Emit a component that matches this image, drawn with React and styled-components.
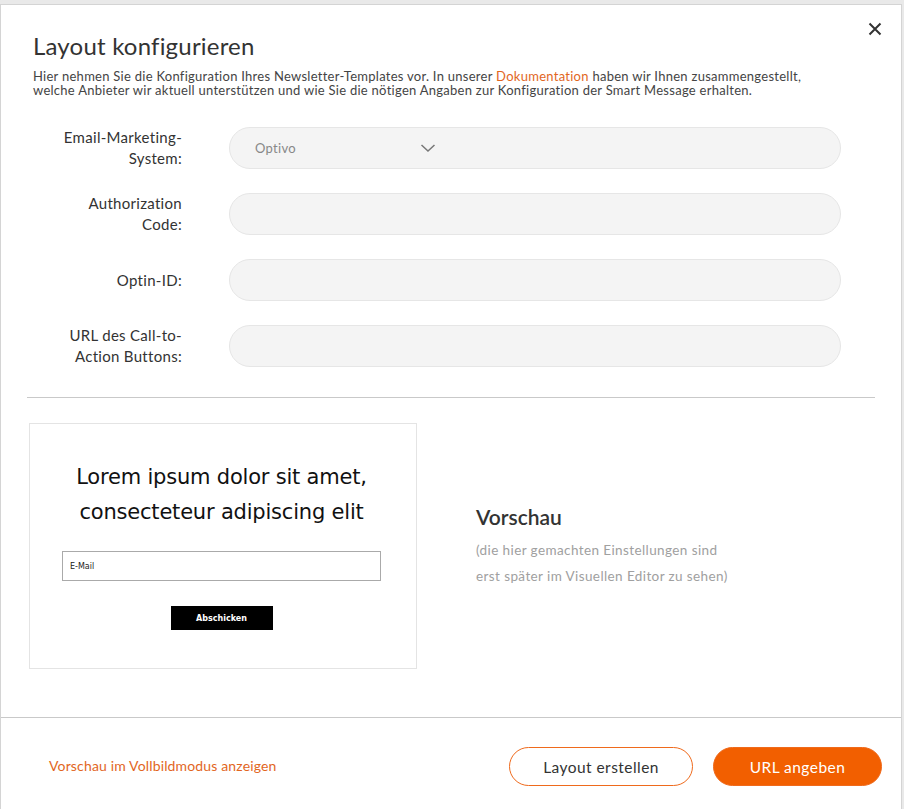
import React from 'react'
import styled, { createGlobalStyle } from 'styled-components'

const GlobalStyle = createGlobalStyle`
  body {
    margin: 0;
    background: #e9e9e9;
    font-family: "Lato", "Open Sans", sans-serif;
    color: #333;
  }
`

const Modal = styled.div`
  margin-top: 4px;
  width: 900px;
  min-height: 804px;
  background: #fff;
  border: 1px solid #d4d4d4;
  position: relative;
`

const Close = styled.button`
  position: absolute;
  top: 17px;
  right: 19px;
  width: 14px;
  height: 14px;
  border: 0;
  background: none;
  padding: 0;
  cursor: pointer;
  display: flex;
`

const Header = styled.div`
  padding: 26px 32px 0;
`

const Title = styled.h1`
  margin: 0 0 8px;
  font-size: 24px;
  line-height: 30px;
  font-weight: 400;
  letter-spacing: 0.2px;
  color: #333;
`

const Intro = styled.p`
  margin: 0;
  font-size: 13px;
  line-height: 14px;
  letter-spacing: 0.27px;
  color: #444;
  a {
    color: #e2661e;
    text-decoration: none;
  }
`

const Form = styled.div`
  display: flex;
  flex-direction: column;
  gap: 24px;
  padding: 30px 60px 30px 0;
`

const Row = styled.div`
  display: grid;
  grid-template-columns: 181px 1fr;
  column-gap: 47px;
  align-items: center;
`

const Label = styled.label`
  text-align: right;
  font-size: 15px;
  line-height: 21px;
  letter-spacing: 0.3px;
  color: #333;
`

const Field = styled.div`
  height: 40px;
  border-radius: 21px;
  background: #f4f4f4;
  border: 1px solid #e6e6e6;
  display: flex;
  align-items: center;
  padding-left: 25px;
  font-size: 13px;
  letter-spacing: 0.3px;
  color: #888;
`

const Chevron = styled.svg`
  margin-left: 124px;
`

const Divider = styled.hr`
  margin: 0 26px;
  border: 0;
  border-top: 1px solid #c9c9c9;
`

const PreviewSection = styled.div`
  display: flex;
  align-items: center;
  padding: 25px 28px 48px;
  gap: 59px;
`

const PreviewBox = styled.div`
  width: 388px;
  height: 246px;
  border: 1px solid #e4e4e4;
  display: flex;
  flex-direction: column;
  align-items: center;
  box-sizing: border-box;
  padding: 36px 3px 0 0;
`

const PreviewHeading = styled.div`
  font-family: "DejaVu Sans", sans-serif;
  font-size: 21px;
  line-height: 35px;
  text-align: center;
  color: #111;
  letter-spacing: -0.2px;
`

const MailInput = styled.div`
  margin-top: 21px;
  width: 319px;
  height: 30px;
  border: 1px solid #aaa;
  box-sizing: border-box;
  display: flex;
  align-items: center;
  padding-left: 7px;
  font-family: "DejaVu Sans", sans-serif;
  font-size: 8px;
  color: #222;
`

const SubmitBtn = styled.div`
  margin-top: 25px;
  width: 102px;
  height: 24px;
  background: #000;
  color: #fff;
  display: flex;
  align-items: center;
  justify-content: center;
  font-family: "DejaVu Sans", sans-serif;
  font-size: 8px;
  font-weight: bold;
`

const PreviewInfo = styled.div`
  padding-top: 0;
`

const InfoTitle = styled.h2`
  margin: 0 0 8px;
  font-size: 21px;
  font-weight: 600;
  color: #333;
`

const InfoText = styled.p`
  margin: 0;
  font-size: 13.5px;
  line-height: 26px;
  letter-spacing: 0.4px;
  color: #a0a0a0;
  width: 252px;
`

const Footer = styled.div`
  border-top: 1px solid #c9c9c9;
  display: flex;
  align-items: center;
  padding: 29px 19px 0 48px;
`

const FooterLink = styled.a`
  font-size: 14px;
  letter-spacing: 0.15px;
  color: #e2661e;
  text-decoration: none;
  margin-right: auto;
  margin-top: -3px;
`

const Button = styled.button`
  height: 39px;
  border-radius: 20px;
  font-family: inherit;
  font-size: 15.5px;
  letter-spacing: 0.45px;
  cursor: pointer;
  border: 1px solid #ef6a1c;
  background: ${(p) => (p.$primary ? '#f25f00' : '#fff')};
  color: ${(p) => (p.$primary ? '#fff' : '#333')};
  width: ${(p) => p.$w}px;
  margin-left: 20px;
`

export default function App() {
  return (
    <>
      <GlobalStyle />
      <Modal>
        <Close aria-label="Schließen">
          <svg width="14" height="14" viewBox="0 0 14 14">
            <path d="M1.5 1.5l11 11M12.5 1.5l-11 11" stroke="#333" strokeWidth="2" />
          </svg>
        </Close>
        <Header>
          <Title>Layout konfigurieren</Title>
          <Intro>
            Hier nehmen Sie die Konfiguration Ihres Newsletter-Templates vor. In unserer{' '}
            <a href="#">Dokumentation</a> haben wir Ihnen zusammengestellt,
            <br />
            welche Anbieter wir aktuell unterstützen und wie Sie die nötigen Angaben zur
            Konfiguration der Smart Message erhalten.
          </Intro>
        </Header>
        <Form>
          <Row>
            <Label>Email-Marketing-<br />System:</Label>
            <Field>
              Optivo
              <Chevron width="16" height="10" viewBox="0 0 16 10">
                <path d="M1.5 2l6.5 6 6.5-6" fill="none" stroke="#777" strokeWidth="1.5" />
              </Chevron>
            </Field>
          </Row>
          <Row>
            <Label>Authorization<br />Code:</Label>
            <Field />
          </Row>
          <Row>
            <Label>Optin-ID:</Label>
            <Field />
          </Row>
          <Row>
            <Label>URL des Call-to-<br />Action Buttons:</Label>
            <Field />
          </Row>
        </Form>
        <Divider />
        <PreviewSection>
          <PreviewBox>
            <PreviewHeading>
              Lorem ipsum dolor sit amet,
              <br />
              consecteteur adipiscing elit
            </PreviewHeading>
            <MailInput>E-Mail</MailInput>
            <SubmitBtn>Abschicken</SubmitBtn>
          </PreviewBox>
          <PreviewInfo>
            <InfoTitle>Vorschau</InfoTitle>
            <InfoText>
              (die hier gemachten Einstellungen sind erst später im Visuellen Editor zu sehen)
            </InfoText>
          </PreviewInfo>
        </PreviewSection>
        <Footer>
          <FooterLink href="#">Vorschau im Vollbildmodus anzeigen</FooterLink>
          <Button $w={184}>Layout erstellen</Button>
          <Button $primary $w={169}>URL angeben</Button>
        </Footer>
      </Modal>
    </>
  )
}
